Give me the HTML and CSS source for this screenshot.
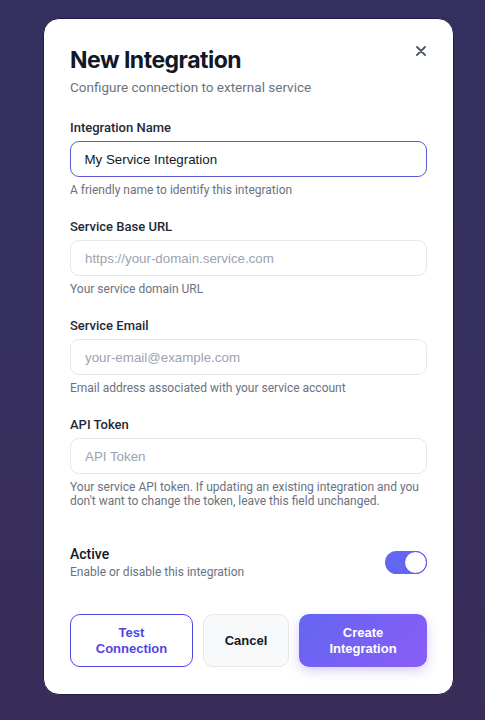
FILE: index.html
```html
<!DOCTYPE html>
<html lang="en">
<head>
<meta charset="utf-8">
<title>New Integration</title>
<link rel="stylesheet" href="styles.css">
</head>
<body>
<div class="stage">
  <div class="modal">
    <button class="close" aria-label="Close">
      <svg width="10" height="10" viewBox="0 0 10 10"><path d="M1 1L9 9M9 1L1 9" stroke="#4b5563" stroke-width="1.8" stroke-linecap="round"/></svg>
    </button>
    <h1 class="title">New Integration</h1>
    <p class="subtitle">Configure connection to external service</p>

    <div class="field first">
      <label class="label">Integration Name</label>
      <div class="input focused">My Service Integration</div>
      <p class="help">A friendly name to identify this integration</p>
    </div>
    <div class="field">
      <label class="label">Service Base URL</label>
      <div class="input placeholder">https://your-domain.service.com</div>
      <p class="help">Your service domain URL</p>
    </div>
    <div class="field">
      <label class="label">Service Email</label>
      <div class="input placeholder">your-email@example.com</div>
      <p class="help">Email address associated with your service account</p>
    </div>
    <div class="field">
      <label class="label">API Token</label>
      <div class="input placeholder">API Token</div>
      <p class="help">Your service API token. If updating an existing integration and you don't want to change the token, leave this field unchanged.</p>
    </div>

    <div class="toggle-row">
      <div>
        <div class="toggle-title">Active</div>
        <div class="toggle-sub">Enable or disable this integration</div>
      </div>
      <div class="switch"><div class="knob"></div></div>
    </div>

    <div class="actions">
      <button class="btn btn-outline">Test<br>Connection</button>
      <button class="btn btn-cancel">Cancel</button>
      <button class="btn btn-primary">Create<br>Integration</button>
    </div>
  </div>
</div>
</body>
</html>
```
FILE: styles.css
```css
* { box-sizing: border-box; }
html, body { margin: 0; height: 100%; }
body {
  background: linear-gradient(180deg, #33305f 0%, #36305e 50%, #392c58 100%);
  font-family: Roboto, "Noto Sans", sans-serif;
}
.stage {
  padding: 18px 0 0 43px;
}
.modal {
  position: relative;
  width: 411px;
  background: #fff;
  border: 1px solid #1f1c4a;
  border-radius: 16px;
  padding: 26px 26px 27px;
}
.close {
  position: absolute;
  top: 24px;
  right: 24px;
  width: 16px;
  height: 16px;
  border: 0;
  background: none;
  padding: 0;
  display: flex;
  align-items: center;
  justify-content: center;
}
.title {
  margin: 0;
  font-family: Inter, Roboto, sans-serif;
  font-size: 23px;
  line-height: 30px;
  font-weight: 700;
  color: #111827;
  letter-spacing: -0.5px;
}
.subtitle {
  margin: 2px 0 0;
  font-size: 13.5px;
  line-height: 20px;
  color: #6b7280;
}
.field { margin-top: 21px; }
.field.first { margin-top: 22px; }
.label {
  display: block;
  font-size: 13px;
  line-height: 18px;
  font-weight: 500;
  color: #1f2937;
}
.input {
  margin-top: 4px;
  height: 36px;
  border: 1px solid #e5e7eb;
  border-radius: 9px;
  padding: 0 14px;
  display: flex;
  align-items: center;
  font-family: "Liberation Sans", Arial, sans-serif;
  font-size: 13.33px;
  color: #111827;
}
.input.focused {
  border: 1.5px solid #5b5bd6;
  padding-left: 13.5px;
}
.input.placeholder { color: #9ca3af; }
.help {
  margin: 6px 0 0;
  font-size: 12px;
  line-height: 14px;
  color: #6b7280;
}
.toggle-row {
  margin-top: 36px;
  display: flex;
  align-items: center;
  justify-content: space-between;
}
.toggle-title {
  font-size: 14px;
  line-height: 20px;
  font-weight: 500;
  color: #111827;
}
.toggle-sub {
  font-size: 12px;
  line-height: 16px;
  color: #6b7280;
}
.switch {
  width: 42px;
  height: 23px;
  border-radius: 12px;
  background: #6366f1;
  position: relative;
}
.knob {
  position: absolute;
  right: 0;
  top: 0;
  width: 23px;
  height: 23px;
  border-radius: 50%;
  background: #fff;
  border: 1.5px solid #4f46e5;
}
.actions {
  margin-top: 34px;
  display: grid;
  grid-template-columns: 123px 86px 1fr;
  gap: 10px;
}
.btn {
  height: 53px;
  border-radius: 10px;
  font-family: "Liberation Sans", Arial, sans-serif;
  font-size: 13px;
  font-weight: 700;
  line-height: 16px;
  padding: 0;
  cursor: pointer;
}
.btn-outline {
  background: #fff;
  border: 1.5px solid #4f46e5;
  color: #4f46e5;
}
.btn-cancel {
  background: #f8f9fb;
  border: 1px solid #e5e7eb;
  color: #111827;
}
.btn-primary {
  border: 0;
  color: #fff;
  background: linear-gradient(135deg, #6366f1 0%, #8b5cf6 100%);
  box-shadow: 0 4px 12px rgba(124, 92, 246, 0.3);
}
```
